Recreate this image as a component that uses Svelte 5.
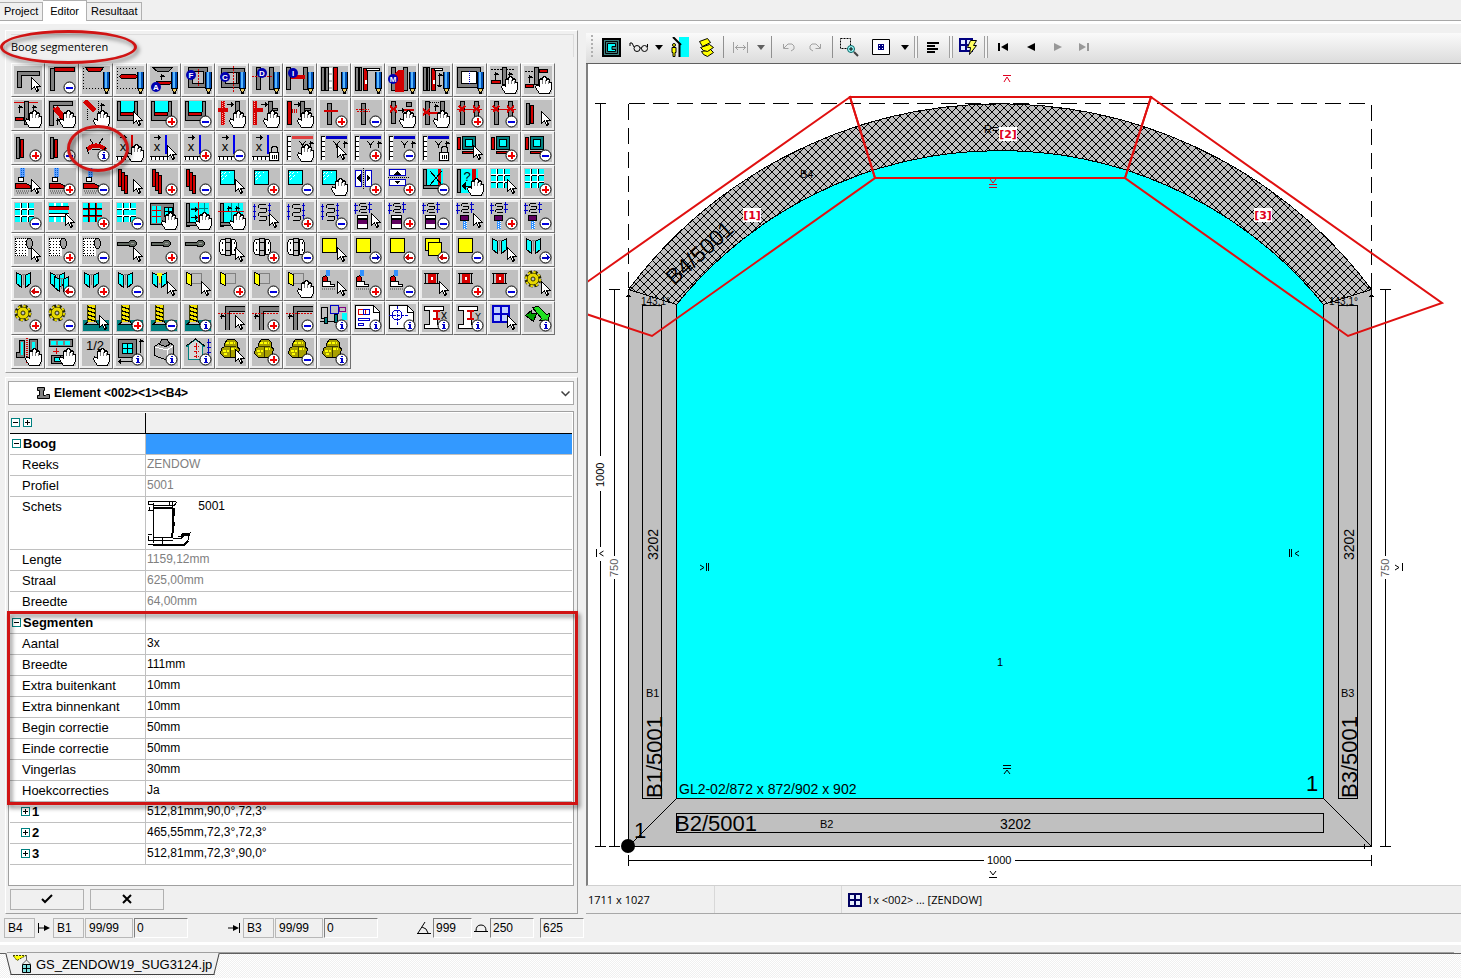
<script>
  const K = "#000";
  const G = "#808080";
  const R = "#d40000";
  const C = "#00ffff";
  const B = "#0000c8";
  const Y = "#ffff00";
  const W = "#fff";
  const T = "#008080";

  const r = (x, y, w, h, fill = "none", stroke) =>
    stroke
      ? `<rect x="${x + 0.5}" y="${y + 0.5}" width="${w - 1}" height="${h - 1}" fill="${fill}" stroke="${stroke}"/>`
      : `<rect x="${x}" y="${y}" width="${w}" height="${h}" fill="${fill}"/>`;
  const p = (d, stroke = K, fill = "none", w = 1, dash = "") =>
    `<path d="${d}" stroke="${stroke}" fill="${fill}" stroke-width="${w}" stroke-dasharray="${dash}"/>`;
  const t = (x, y, s, size = 9, fill = K, weight = 400) =>
    `<text x="${x}" y="${y}" font-size="${size}" fill="${fill}" font-weight="${weight}" text-anchor="middle" font-family="Liberation Sans, sans-serif">${s}</text>`;
  const badge = (x, y, s) =>
    `<circle cx="${x}" cy="${y}" r="5" fill="#0000b0" shape-rendering="auto"/>` + t(x, y + 3, s, 8, W, 700);
  const move = (x, y, s) => `<g transform="translate(${x} ${y})">${s}</g>`;

  const disc = `<circle cx="21.5" cy="21.5" r="5.5" fill="#fff" stroke="#000" shape-rendering="auto"/>`;
  const marks = {
    c: p("M17.5 11.5v12l3-3 2 5 2-1-2-4h4z", K, W),
    "+": disc + r(18, 21, 7, 2, "#f00000") + r(21, 18, 2, 7, "#f00000"),
    "-": disc + r(18, 21, 7, 2, "#0000e0"),
    i: disc + r(21, 18, 2, 1, B) + r(20, 20, 3, 1, B) + r(21, 20, 2, 5, B) + r(20, 24, 4, 1, B),
    h: p("M15.5 27.5l-4-6 1-3 3 2v-7l2-1 1 2v-3l2-1 2 1v3l1-2 2 1v3l2 0 0 6-2 5z", K, W) +
      p("M18.5 14v4M21.5 14v4M24.5 15v3", G),
    p: r(21, 6, 7, 17, "#0050b8") + r(23, 6, 2, 17, "#58b8ff") + r(21, 6, 1, 17, K) + r(27, 6, 1, 17, K) +
      p("M21.5 22.5l3 5 3-5z", K, "#e8c860") + r(23, 26, 3, 2, K),
    l: r(17, 18, 10, 9, W, K) + p("M19.5 18v-4l2-2h2l2 2v4", K) + p("M20.5 21v4M22.5 21v4M24.5 21v4"),
    ">": disc + r(18, 21, 7, 2, B) + p("M22.5 18.5l3 3-3 3", B, B),
    "<": disc + r(18, 21, 7, 2, R) + p("M20.5 18.5l-3 3 3 3", R, R),
  };

  const post = (x, y = 1, h = 24, fill = G) => r(x, y, 5, h, fill, K);
  const up = (x, y, h = 8) => p(`M${x}.5 ${y}v${h}M${x - 2}.5 ${y + 2}.5h5M${x - 1}.5 ${y + 1}.5h3`);
  const right = (x, y) => p(`M${x} ${y}.5h7M${x + 4}.5 ${y - 2}v5M${x + 5}.5 ${y - 1}v3`);
  const slab = r(2, 3, 4, 22, G, K) + r(6, 5, 4, 19, R, K);
  const blocks = [1, 8, 15].map((y) => [1, 8, 15].map((x) => r(x, y, 5, 5, C)).join("")).join("");
  const bars = "M1 6.5h19M1 13.5h19M6.5 1v19M13.5 1v19";
  const cells = (line) =>
    r(1, 1, 19, 19, W) + p(bars, line, "none", 3, line === R ? "" : "5 2") + p(bars, line === R ? K : W) + blocks;
  const chain = p("M2.5 2v16M1 4.5h3M1 9.5h3M1 14.5h3M17.5 1v16M16 3.5h3M16 8.5h3M16 13.5h3", B) +
    p("M7 2.5h7M8 6.5h7M7 10.5h7M8 14.5h7M7 18.5h7M6.5 3v3M14.5 7v3M6.5 11v3M14.5 15v3");
  const chainTop = p("M1.500 1v11M0 3.5h4M0 8.5h4M15.5 0v11M14 2.5h4M14 7.5h4", B) +
    p("M6 1.5h6M7 4.5h6M6 7.5h6M7 10.5h6M5.5 2v2M12.5 5v2M5.5 8v2");
  const pane = r(2, 2, 15, 15, C, K) + p("M3 9l6-6M4 12l8-8M3 6l3-3", W, "none", 1, "1 1");
  const doors = p("M2.5 2.5l5 3v12l-5-4zM16.5 2.5l-5 3v12l5-4z", K, C) + p("M7.5 4.5h4M9.5 5v10", G);
  const gear = `<g shape-rendering="auto"><circle cx="9" cy="9" r="6.5" fill="none" stroke="#202000" stroke-width="4" stroke-dasharray="3.5 1.6"/>` +
    `<circle cx="9" cy="9" r="6" fill="#e8d800" stroke="#303000"/><circle cx="9" cy="9" r="7" fill="none" stroke="#e8d800" stroke-width="2" stroke-dasharray="2.500 3"/>` +
    `<circle cx="9" cy="9" r="2" fill="#c0c0c0" stroke="#303000"/></g>`;
  const spring = r(1, 16, 26, 11, T) + p("M3 20.5h13l-2-3h-8z", K, "#c0c0c0") + r(5, 1, 9, 17, "#f0e000") +
    p("M5 2.5l9 3M5 6.5l9 3M5 10.5l9 3M5 14.5l9 3") + p("M5.5 1v17M13.5 1v17", "#404000");
  const xruler = (col) => p(`M16 1v19`, col, "none", 2) + right(4, 3) + t(7, 17, "x", 13) +
    r(0, 22, 19, 4, W) + p("M0 22.5h19M1.5 22v4M5.5 22v4M9.5 22v4M13.5 22v4M17.5 22v4");
  const yruler = (col) => r(1, 2, 4, 24, W) + p("M1.5 2v24M1 2.5h4M1 7.5h4M1 12.5h4M1 17.5h4M1 22.5h4") +
    r(6, 2, 21, 3, col) + p("M13 7l3.500 4 3.500-4M16.5 11v3") + up(24, 7, 7);
  const sqTeal = r(1, 3, 4, 13, R, K) + r(6, 2, 14, 14, T, K) + r(9, 5, 8, 8, C, K) + r(6, 17, 13, 3, R, K);
  const shower = r(6, 0, 5, 9, "#60a0ff") + p("M7.5 0v9M9.5 0v9", "#0060d0", "none", 1, "1 1") +
    p("M4.5 9.5h5v4h-5z", K, W) + p("M1.5 15.5h10l5 2v3h-15z", K, R) + p("M2 22.5h16M3 24.5h12", G, "none", 2, "1 1");
  const tap = r(6, 0, 4, 6, "#3090ff") + p("M2.5 11.5v-4l3-2 2 2v4z", K, R) +
    p("M2.5 11.5h8v3h4v2h-12z", K, W) + p("M2 18.5h13", G, "none", 2, "1 1");
  const slabs = r(2, 1, 4, 18, R, K) + r(5, 4, 4, 19, R, K) + r(8, 7, 4, 19, R, K);
  const glassRed = r(1, 1, 21, 20, G, K) + r(5, 1, 13, 11, C) + r(4, 12, 14, 4, R, K) + p("M4.5 1v11M18.5 1v11");
  const roll = r(1, 3, 13, 17, W) + p("M2 5.5h12M2 8.5h12M2 11.5h12M2 14.5h12M2 17.5h12", K, "none", 1, "1 2") + p("M1 2.5h12M1 19.5h12M1.5 3v16", K, "none", 1, "1 1") +
    p("M13.5 2.5h3l2 3v4l-2 3h-2l-2-3v-4z", K, "#a0a0a0");
  const handle = p("M1.5 6.5h11l2-2h4l2 2v2l-2 2h-4l-2-1h-11z", K, "#606860") + p("M15 7.5h3", "#a0a0a0");
  const hinge = p("M3.5 3.5h4v15h-4l-2-3v-9zM13.5 3.5h3l2 3v9l-2 3h-3z", K, W) + r(7, 2, 6, 18, "#c0c0c0", K) +
    p("M7 6.5h6M7 14.5h6") + p("M4.500 6v2M4.500 13v2M16 6v2M16 13v2", K, "none", 1);
  const yellow = r(2, 2, 15, 15, Y, K);
  const doorY = r(7, 3, 11, 11, "none", G) + p("M2.5 2.5l5 2v11l-5-2z", K, Y);
  const bolt = p("M2 3.5h15M2 13.5h15M3.5 3v10M15.5 3v10") + r(6, 4, 8, 9, W, R) + r(7, 5, 6, 7, R) + r(9, 7, 2, 3, W);
  const lintel = p("M7.5 26V2.5H27M11.5 26V7.5H27", K, "none") + r(8, 3, 19, 4, G) + r(8, 3, 3, 23, G) +
    p("M0 9.5h27", R, "none", 1, "2 1") + up(3, 10, 5);
  const xx = p("M1 9.5h25", R) + post(4) + post(18) + p("M3 6l6 6M9 6l-6 6M17 6l7 6M24 6l-7 6", R, "none", 2);
  const bag = p("M6.5 5.5l3-4h7l3 3v5l2 1-1 6-4 3h-10l-4-4 1-5 3-2z", K, "#a8a000") +
    p("M8 4.5h9M5 12.5h6M13 10.5h5M6 15.5h4", Y, "none", 2, "3 1") + p("M6 8.5h12M12.5 8v11", "#404000");
  const beam = p("M2.5 2.5h19v4h-6v14h6v4h-19v-4h5v-14h-5z", K, W);

  const glyphs = {
    corner: p("M3.5 21.5V5.5H25.5V9.5H7.5V21.5z", K, G),
    cornerRed: r(2, 2, 5, 23, G, K) + r(6, 1, 21, 5, R, K),
    topRed: p("M1.5 2v21M1 22.5h20", K, "none", 1, "1 2") + p("M3.5 1.5h18l-3 4h-12z", K, R),
    midRed: p("M1.5 2v21M1 22.5h20M1 2.5h20", K, "none", 1, "1 2") + p("M3.5 10.5l2-2h14l2 2-2 2h-14z", K, R),
    a: p("M2.5 1.5h20l-4 4h-11z", K, G) + up(11, 8, 6) + p("M6.5 15.5h16l-3 3h-10z", K, R) + badge(6, 21, "A"),
    f: r(4, 1, 20, 21, G, K) + r(8, 5, 12, 13, "#c0c0c0", K) + p("M14.5 3v17", R, "none", 1, "2 1") + badge(7, 9, "F"),
    cc: r(3, 2, 24, 20, G, K) + r(7, 6, 17, 12, "#c0c0c0", K) + p("M15.5 0v26", R, "none", 1, "2 1") + r(18, 6, 3, 12, G, K) + badge(7, 11, "C"),
    d: post(4, 1, 23) + post(17, 1, 23) + p("M0 10.5h21", R, "none", 1, "2 1") + badge(10, 7, "D"),
    ii: post(0, 1, 23) + post(17, 1, 23) + r(5, 9, 14, 4, R) + badge(7, 7, "I"),
    prof: r(1, 1, 4, 24, G, K) + r(5, 1, 4, 24, G, K) + p("M10.5 2v22", W, "none", 3, "5 2") + r(13, 1, 5, 24, R, K),
    handleRed: r(1, 1, 4, 24, G, K) + r(5, 1, 3, 24, G, K) + r(9, 2, 5, 23, R, K) + r(11, 14, 2, 4, W) + r(12, 2, 14, 3, W, K),
    m: r(3, 1, 5, 24, G, K) + r(15, 1, 5, 24, G, K) + p("M7 8l4-4h4v21h-8z", R, R) + badge(5, 13, "M"),
    handleUp: r(1, 1, 4, 24, G, K) + r(5, 1, 3, 24, G, K) + r(9, 2, 5, 23, R, K) + r(11, 14, 2, 4, W) + r(12, 2, 9, 3, W, K) + up(17, 7, 14) + p("M15 19.5h5M16 20.5h3"),
    window: r(1, 1, 24, 21, G, K) + r(5, 5, 16, 13, W, K) + p("M13.5 5v13", B, "none", 1, "1 1"),
    ups: p("M1 3.5h24", K, "none", 1, "2 1") + post(12, 1, 18) + up(5, 6) + up(19, 6) + r(1, 14, 10, 4, R, K),
    ups2: p("M1 5.5h9", K, "none", 1, "2 1") + post(10, 1, 18) + r(15, 3, 9, 4, R, K) + up(5, 9) + r(1, 18, 9, 4, R, K),
    tee: p("M0 2.5h24", R) + post(10, 1, 24) + up(5, 5) + up(19, 5) + r(1, 17, 9, 4, R, K),
    diag: p("M1.5 25V1.5H24V5.5H5.5V25z", K, G) + p("M5.5 8l9 11M8.5 7l8 10", R, "none", 3) + up(9, 18, 7),
    diag2: p("M3 1l10 10", R, "none", 5) + p("M16 1v18M5 9v12", K, "none", 1, "1 1") + up(19, 3, 7),
    glassRed,
    cross: r(3, 1, 4, 24, R) + p("M4.5 1v24M6.5 2v24", "#ffa0a0", "none", 1, "1 1") + r(0, 8, 10, 4, R) + right(9, 4) + post(17, 1, 16),
    cross2: r(1, 1, 4, 24, R) + p("M2.5 1v24", "#ffa0a0", "none", 1, "1 1") + r(2, 8, 9, 4, R) + right(9, 4) + post(16, 1, 16) + r(20, 8, 6, 3, G, K),
    cross3: r(1, 1, 5, 24, R, K) + p("M6 9.5h6M6 11.5h6", R, "none", 2, "1 1") + right(8, 4) + post(14, 1, 16) + r(18, 8, 7, 3, G, K),
    postRed: post(7, 3, 22) + r(4, 10, 14, 2, R),
    postDot: post(7, 3, 22) + p("M2 9.5h13M3 11.5h13", R, "none", 1, "2 1"),
    xPost: post(3, 1, 23) + p("M2 6l7 6M9 6l-7 6", R, "none", 2) + right(10, 10) + r(18, 2, 6, 5, G, K) + r(16, 9, 10, 2, R),
    xPost2: post(3) + post(18) + p("M1 9l7 6M8 9l-7 6", R, "none", 2) + up(13, 4, 7) + p("M8 2.5h10", K, "none", 1, "1 1") + r(3, 12, 14, 2, R),
    xx,
    slab,
    arc: p("M5 16q9-9 19 0", R, "none", 4) + p("M4 13l3 7M11 10l-3-5M17 10l4-6M24 13l-4 6M10 15h8", K),
    xRed: xruler(R), xBlue: xruler("#0000f0"), yRed: yruler("#e04040"), yBlue: yruler(B),
    sqTeal, shower, slabs, pane,
    splitH: r(1, 2, 7, 17, W, B) + r(11, 2, 7, 17, W, B) + p("M9.5 0v21", K, "none", 1, "1 1") + p("M3 10l3-3v6zM16 10l-3-3v6z", K, K),
    splitV: r(1, 1, 17, 7, W, B) + r(1, 11, 17, 7, W, B) + p("M0 9.5h21", K, "none", 1, "1 1") + p("M9.5 4l-2 2h4zM9.5 15l-2-2h4z", K, K),
    glassX: r(1, 1, 20, 20, C) + r(1, 1, 4, 20, G, K) + r(1, 17, 20, 4, G, K) + r(16, 1, 3, 16, R) + p("M8 3l12 14M20 3L8 17", K, "none", 1),
    glassQ: r(1, 1, 21, 24, C) + r(1, 1, 4, 24, G, K) + r(16, 1, 4, 13, R) + t(11, 13, "?", 13) + p("M6 18l3-3v6zM6 18.5h10", K, K),
    grid: cells(K),
    gridBar: r(1, 1, 19, 19, C) + p("M6.5 1v5M13.5 1v5M6.5 14v6M13.5 14v6", W, "none", 2) + p("M1 6.5h20", R, "none", 3) + p("M1 12.5h20", W, "none", 3) + p("M1 11.5h20M1 14.5h20M1 4.5h20", K),
    gridRed: cells(R),
    gridGap: cells(K) + r(8, 8, 12, 5, C),
    gridWin: r(0, 1, 24, 22, G, K) + r(2, 4, 9, 17, C) + p("M2 8.5h9M2 14.5h9M6.5 4v17", R) + r(14, 5, 9, 10, C, K) + p("M14 9.5h9M18.5 5v10"),
    rulerCyan: r(3, 1, 22, 22, C) + r(2, 1, 4, 24, G, K) + r(2, 20, 12, 4, G, K) + p("M14.5 0v26", R) + p("M7 6.5h17M20.5 1v14", T) + right(7, 7) + right(7, 15),
    rulerCyan2: r(3, 1, 22, 22, C) + r(2, 1, 4, 24, G, K) + r(2, 20, 12, 4, G, K) + p("M0 9.5h26", R) + p("M13.5 1v18M20.5 1v18", T) + up(10, 4, 5) + up(18, 4, 5),
    chain,
    chainBox: chainTop + r(3, 13, 11, 4, W, K) + r(3, 17, 11, 6, "#600060", K) + p("M3.5 22v4h10v-4", K, W),
    chainTip: chainTop + r(4, 13, 9, 6, "#600060", K) + p("M9 19v8", "#3090ff", "none", 4) + p("M8.5 20v7M10.5 19v8", W, "none", 1, "1 1"),
    roll, handle, hinge, yellow,
    yellow2: r(3, 2, 15, 13, Y, K) + r(6, 6, 14, 14, Y, K),
    doors,
    doors2: doors + move(4, 4, doors),
    doorsY: doors + r(7, 3, 5, 3, Y) + r(9, 5, 2, 8, Y),
    doorY, tap, bolt, gear, spring, lintel,
    pipes: r(1, 3, 7, 12, "#c0c0c0", K) + r(10, 1, 9, 9, "#c0c0c0", B) + r(19, 3, 7, 5, "#c0c0c0", "#800080") + r(4, 13, 4, 7, T, K) + r(14, 10, 4, 9, T, K) + r(22, 9, 5, 7, C) + p("M0 17.5h4M8 17.5h6"),
    plan: p("M1.5 1.5h18l6 6v17h-24z", K, W) + p("M19.5 2v6h6") + r(4, 5, 8, 6, "none", R) + r(9, 5, 7, 6, "none", B) + r(4, 14, 12, 3, "none", B) + r(4, 19, 6, 3, "none", B),
    target: p("M1.5 1.5h18l6 6v17h-24z", K, W) + p("M19.5 2v6h6") + `<circle cx="9" cy="11" r="5" fill="none" stroke="${B}"/>` + p("M9.5 2v19M1 11.5h20", B, "none", 1, "3 1"),
    beamX: beam + p("M11 7h7M11 15h7M14.5 7v8", R, "none", 2) + t(22, 15, "x", 12),
    beamY: beam + p("M11 7h7M11 15h7M14.5 7v8", R, "none", 2) + t(22, 15, "Y", 9),
    win4: r(2, 1, 18, 18, W, B) + r(3, 2, 16, 16, "#c0d0ff", B) + p("M11 2v16M3 10h16", B, "none", 2),
    green: p("M1.5 11.5l6-5v3l5 0-3 8z", K, "#00a000") + p("M8.5 3.5l6-1 8 8 3-1-1 8-9-1 2-2z", K, "#20e020"),
    sliders: p("M5.5 2.500h5v17h-8v-5h3z", K, G) + r(7, 4, 2, 13, C) + r(15, 1, 9, 15, G, K) + r(18, 4, 3, 10, C) + p("M12.5 0v26", R, "none", 2, "1 1"),
    frames: r(1, 1, 24, 8, G, K) + r(3, 3, 5, 4, C) + r(10, 3, 5, 4, C) + r(17, 3, 5, 4, C) + p("M5 13.5h6M8.5 10v6", R) + r(3, 17, 16, 9, G, K) + r(6, 19, 8, 5, C, K),
    half: t(13, 12, "1/2", 13),
    frameCross: r(2, 1, 19, 19, G, K) + r(6, 5, 11, 11, C, K) + p("M11.5 6v9M7 10.5h9") + up(24, 1, 14) + p("M2 23.5h14M4.5 21v5M3.5 22v3"),
    box: p("M4.5 8.5l6-4h9l4 3v9l-6 6-13-5z", K, "#b8b8b8") + p("M5 9l12 3 6-4M17.5 12v10", W) + p("M9.5 6.5l2-5h6l2 5-4 2z", K, "#909090"),
    house: p("M4.5 21.5v-13l-2 0 9-7 9 7h-2v13z", T, "#d8d8d8") + p("M2 8l9.5-7 9.5 7") + p("M12.5 5v16M10 8.5h5M10 13.5h5M10 18.5h5", R, "none", 1, "3 1") + p("M24.5 1v17M23 4.5h4M23 9.5h4M23 14.5h4", B),
    bag,
  };

  // one row of the palette per line, "glyph:mark"
  const palette = `
    corner:c cornerRed:- topRed:p midRed:p a:p f:p cc:p d:p ii:p prof:p handleRed:p m:p handleUp:p window:p ups:h ups2:h
    tee:h diag:h diag2:h glassRed:c glassRed:+ glassRed:- cross:h cross2:h cross3:h postRed:+ postDot:- xPost:h xPost2:h xx:+ xx:- slab:c
    slab:+ slab:- arc:i xRed:h xBlue:c xBlue:+ xBlue:- xBlue:l yRed:h yBlue:c yBlue:+ yBlue:- yBlue:l sqTeal:c sqTeal:+ sqTeal:-
    shower:c shower:+ shower:- slabs:c slabs:+ slabs:- pane:c pane:+ pane:- pane:h splitH:+ splitV:+ glassX:- glassQ:h grid:c grid:+
    grid:- gridBar:c gridRed:+ gridGap:- gridWin:h rulerCyan:h rulerCyan2:h chain:c chain:+ chain:- chainBox:c chainBox:+ chainBox:- chainTip:c chainTip:+ chainTip:-
    roll:c roll:+ roll:- handle:c handle:+ handle:- hinge:c hinge:+ hinge:- yellow:c yellow:> yellow:< yellow2:< yellow:- doors:c doors:>
    doors:< doors2:< doors:+ doors:- doorsY:c doorY:c doorY:+ doorY:- doorY:h tap:c tap:+ tap:- bolt:c bolt:+ bolt:- gear:c
    gear:+ gear:- spring:c spring:+ spring:- spring:i lintel:c lintel:+ lintel:- pipes:i plan:i target:i beamX:i beamY:i win4:c green:i
    sliders:h frames:h half:h frameCross:i box:i house:i bag:c bag:+ bag:- bag:i`;
  const tools = palette.trim().split(/\s+/).map((s) => s.split(":"));

  const boog = [
    ["Reeks", "ZENDOW"],
    ["Profiel", "5001"],
    ["Schets", "5001"],
    ["Lengte", "1159,12mm"],
    ["Straal", "625,00mm"],
    ["Breedte", "64,00mm"],
  ];
  const segmenten = [
    ["Aantal", "3x"],
    ["Breedte", "111mm"],
    ["Extra buitenkant", "10mm"],
    ["Extra binnenkant", "10mm"],
    ["Begin correctie", "50mm"],
    ["Einde correctie", "50mm"],
    ["Vingerlas", "30mm"],
    ["Hoekcorrecties", "Ja"],
  ];
  const delen = [
    ["1", "512,81mm,90,0°,72,3°"],
    ["2", "465,55mm,72,3°,72,3°"],
    ["3", "512,81mm,72,3°,90,0°"],
  ];
</script>

{#snippet expander(open)}
  <svg class="expander" width="9" height="9" viewBox="0 0 9 9">
    <rect x=".5" y=".5" width="8" height="8" fill="#fff" stroke="#008080" />
    <path d={open ? "M2 4.5h5" : "M2 4.5h5M4.5 2v5"} stroke="#000" />
  </svg>
{/snippet}

{#snippet caret(off)}
  <button class="caret" aria-label="Meer"><svg width="9" height="5" viewBox="0 0 9 5"><path d="M0 0h8l-4 5z" fill={off ? "#606060" : "#000"} /></svg></button>
{/snippet}

<div class="app">
  <nav class="tabs">
    <button>Project</button>
    <button class="active">Editor</button>
    <button>Resultaat</button>
  </nav>

  <main>
    <section class="left">
      <div class="toolbox">
        <div class="title"><span>Boog segmenteren</span></div>
        <div class="palette">
          {#each tools as [glyph, mark]}
            <button class="tool" class:marked={glyph === "arc"} aria-label={glyph + " " + mark}>
              <svg width="28" height="28" viewBox="0 0 28 28">{@html glyphs[glyph] + marks[mark]}</svg>
            </button>
          {/each}
        </div>
      </div>

      <div class="props">
        <div class="element">
          <select aria-label="Element">
            <option>Element &lt;002&gt;&lt;1&gt;&lt;B4&gt;</option>
          </select>
          <svg class="profile" width="13" height="13" viewBox="0 0 13 13"><path d="M.5.5h7v3h-1v5h2l1-1h3v4h-12v-3h2v-5h-2z" fill="#808080" stroke="#000" /></svg>
          <svg class="arrow" width="9" height="6" viewBox="0 0 9 6"><path d="M.5.5l4 4 4-4" fill="none" stroke="#404040" stroke-width="1.5" /></svg>
        </div>

        <div class="grid">
          <table>
            <thead>
              <tr><th>{@render expander(true)} {@render expander(false)}</th><td></td></tr>
            </thead>
            <tbody>
              <tr class="group selected"><th>{@render expander(true)}Boog</th><td></td></tr>
              {#each boog as [label, value]}
                <tr class:sketch={label === "Schets"}>
                  <th>{label}</th>
                  <td class:readonly={label !== "Schets"}>
                    {#if label === "Schets"}
                      <svg width="44" height="46" viewBox="0 0 44 46" fill="none" stroke="#000">
                        <path d="M0 1.5h28M0 1v3h5M0 10.5h5M5.5 3v40M1.5 10v-3M6 5.5h20M24.5 2v6M21.5 2v4M29 2l-3 4M22 8h4v8M24 20l2 2v4M6 37.500h19M6 40.500h19M14.500 38v6M25 38.500h8l3-3M34 34l8-1-2 4v3l-4 5M0 36v4h5M30 37l10-2M0 44.500h5M0 34.500h4" />
                        <path d="M6 8h19M25 9v20l-1 8M5 45h31l4-4M33 35h9" stroke-width="2" />
                      </svg>
                    {/if}
                    <span>{value}</span>
                  </td>
                </tr>
              {/each}
            </tbody>
            <tbody class="outlined">
              <tr class="group"><th>{@render expander(true)}Segmenten</th><td></td></tr>
              {#each segmenten as [label, value]}
                <tr><th>{label}</th><td>{value}</td></tr>
              {/each}
            </tbody>
            <tbody>
              {#each delen as [label, value]}
                <tr class="group sub"><th>{@render expander(false)}{label}</th><td>{value}</td></tr>
              {/each}
            </tbody>
          </table>
        </div>

        <div class="actions">
          <button aria-label="OK"><svg width="12" height="10" viewBox="0 0 12 10"><path d="M1 5l3 3 7-7" fill="none" stroke="#000" stroke-width="2" /></svg></button>
          <button aria-label="Annuleren"><svg width="10" height="10" viewBox="0 0 10 10"><path d="M1 1l8 8M9 1l-8 8" stroke="#000" stroke-width="2" /></svg></button>
        </div>
      </div>
    </section>

    <section class="right">
      <div class="toolbar">
        <i class="grip"></i>
        <button aria-label="Kader"><svg width="19" height="19" viewBox="0 0 19 19"><path d="M1 1h17v17H1z" fill="#408080" stroke="#000" stroke-width="2" /><path d="M3.5 3.5h12v12h-12z" fill="#408080" stroke="#000" /><path d="M5.5 5.5h8v8h-8z" fill="#00ffff" stroke="#000" /><path d="M14 8.500h-4v3h4" fill="#408080" stroke="#000" /></svg></button>
        <button aria-label="Bril"><svg width="20" height="12" viewBox="0 0 20 12" fill="none" stroke="#000"><circle cx="8" cy="7.5" r="3" /><circle cx="15.5" cy="7.5" r="3" /><path d="M5 6l-2-4-2 0v3M11 7h2M18.5 6V3" /></svg></button>
        {@render caret(false)}
        <button aria-label="Binnen"><svg width="18" height="20" viewBox="0 0 18 20"><path d="M8 0h10v20H8z" fill="#00ffff" /><path d="M2 0l8 8M8.5 7v13" stroke="#000" stroke-width="2" fill="none" /><circle cx="3" cy="8" r="1.5" fill="#ffff00" stroke="#000" /><path d="M1 10.5h4v5H4v4H2v-4H1z" fill="#ffff00" stroke="#000" /></svg></button>
        <button aria-label="Lagen"><svg width="17" height="19" viewBox="0 0 17 19" fill="#ffff00" stroke="#000"><path d="M3.5 13.5l9-2 3 3-6 4-4-2z" /><path d="M2.5 9.500l9-3 4 3-6 4-4-1z" /><path d="M1.5 3.5l8-3 3 4-8 4z" /></svg></button>
        <i class="sep"></i>
        <button aria-label="Maat"><svg width="15" height="11" viewBox="0 0 15 11" fill="none" stroke="#a0a0a0"><path d="M.5 0v11M14.5 0v11M2 5.5h11M5 3L2.5 5.5 5 8M10 3l2.5 2.5L10 8" /></svg></button>
        {@render caret(true)}
        <i class="sep"></i>
        <button aria-label="Ongedaan"><svg width="13" height="9" viewBox="0 0 13 9" fill="none" stroke="#a0a0a0"><path d="M1.5 1v4.5h5M2 5l4-4h4l2 2v3l-3 2" /></svg></button>
        <button aria-label="Opnieuw"><svg width="13" height="9" viewBox="0 0 13 9" fill="none" stroke="#a0a0a0"><path d="M11.5 1v4.5h-5M11 5L7 1H3L1 3v3l3 2" /></svg></button>
        <i class="sep"></i>
        <button aria-label="Zoom"><svg width="19" height="19" viewBox="0 0 19 19" fill="none" stroke="#000"><path d="M.5.5h10v10H.5z" stroke-dasharray="2 1" /><circle cx="11" cy="11" r="3.5" fill="#a0ffff" stroke="#006060" /><path d="M9 11h4M11 9v4" /><path d="M14 14l4 4" stroke-width="2" stroke="#404040" /></svg></button>
        <button class="wide" aria-label="Beeld"><svg width="18" height="16" viewBox="0 0 18 16"><path d="M.5.5h17v15H.5z" fill="#fff" stroke="#000" /><path d="M6 5h6v6H6z" fill="#000080" /><path d="M7.5 6v1M10.5 6v1M7.5 9v1M10.5 9v1" stroke="#fff" /></svg></button>
        {@render caret(false)}
        <i class="sep double"></i>
        <button aria-label="Lijst"><svg width="13" height="11" viewBox="0 0 13 11" stroke="#000" stroke-width="2"><path d="M0 1h12M0 4h8M0 7h11M0 10h8" /></svg></button>
        <i class="sep double"></i>
        <button aria-label="Bereken"><svg width="19" height="18" viewBox="0 0 19 18"><path d="M1 1h12v12H1z" fill="#e0e8ff" stroke="#000080" stroke-width="2" /><path d="M7 1v12M1 7h12" stroke="#000080" stroke-width="2" /><path d="M11.500 2.500h6l-3 5h3l-7 9 1-7h-3z" fill="#ffff60" stroke="#000" /></svg></button>
        <i class="sep double"></i>
        <button aria-label="Eerste"><svg width="11" height="8" viewBox="0 0 11 8"><path d="M0 0h2v8H0zM10 0v8L3 4z" /></svg></button>
        <button aria-label="Vorige"><svg width="8" height="8" viewBox="0 0 8 8"><path d="M8 0v8L0 4z" /></svg></button>
        <button aria-label="Volgende"><svg width="8" height="8" viewBox="0 0 8 8" fill="#989898"><path d="M0 0v8l8-4z" /></svg></button>
        <button aria-label="Laatste"><svg width="11" height="8" viewBox="0 0 11 8" fill="#989898"><path d="M8 0h2v8H8zM0 0v8l7-4z" /></svg></button>
      </div>

      <svg class="drawing" viewBox="588 64 873 821">
        <defs>
          <pattern id="hatch" width="8" height="8" patternUnits="userSpaceOnUse">
            <path d="M-1 -1L9 9M-1 9L9 -1" stroke="#000" />
          </pattern>
        </defs>

        <g class="lines">
          <path d="M628.5 103.5H1371.5V290M628.5 103.5V290" stroke-dasharray="16 8" />
          <path d="M628.5 289.5L676.5 304.5V798.5H1323.5V304.5L1371.5 289.5V846.5H628.5z" fill="#c0c0c0" />
          <path d="M676.5 304.5A417 417 0 0 1 1323.5 304.5V798.5H676.5z" fill="#00ffff" />
          <path d="M628.5 289.5A464.6 464.6 0 0 1 1371.5 289.5L1323.5 304.5A417 417 0 0 0 676.5 304.5z" fill="#c0c0c0" />
          <path d="M628.5 289.5A464.6 464.6 0 0 1 1371.5 289.5L1323.5 304.5A417 417 0 0 0 676.5 304.5z" fill="url(#hatch)" />
          <path d="M642.5 305.5h19v493h-19zM1338.5 305.5h19v493h-19zM676.5 813.5h647v19h-647z" />
          <path d="M628.5 846.5l48-48M1371.5 846.5l-48-48" />
          <path d="M600.5 103.5V456M600.5 491V547M600.5 561V846M595 103.5h11M595 846.5h11" />
          <path d="M614.5 289.5V556M614.5 579V846M609 289.5h11M609 846.5h11" />
          <path d="M1385.5 289.5V556M1385.5 579V846M1380 289.5h11M1380 846.5h11" />
          <path d="M628.5 860.5H984M1015 860.5H1371.5M628.5 855v11M1371.5 855v11" />
          <path d="M626 296.5h5M627 295.5h3M1369 296.5h5M1370 295.5h3M1363 846.5h8M1364.5 844v5" />
        </g>
        <circle cx="628" cy="846" r="7" />

        <g class="signs">
          <path d="M596.5 549v8M603.5 551l-4 2.5 4 2.5" />
          <path d="M700 565l4 2.5-4 2.5M706.5 563v8M708.5 563v8" />
          <path d="M1289.5 549v8M1291.5 549v8M1299 551l-4 2.5 4 2.5" />
          <path d="M1395 565l4 2.5-4 2.5M1402.5 563v8" />
          <path d="M1003 765.5h8M1003 768.5h8M1004 774l3-4 3 4" />
          <path d="M990 871l3 4 3-4M989 877.5h8" />
          <path class="red" d="M1003 75.5h8M1004 82l3-5 3 5M989 184.5h8M989 187.5h8M990 179l3 4 3-4" />
        </g>

        <text x="641" y="305" class="tiny">143,1°</text>
        <text x="1329" y="305" class="tiny">143,1°</text>
        <text x="800" y="178" class="small">B4</text>
        <text x="984" y="133" class="small">R=</text>
        <text class="big" transform="translate(674 286) rotate(-42)">B4/5001</text>
        <text class="big" transform="translate(662 798) rotate(-90)">B1/5001</text>
        <text class="big" transform="translate(1357 798) rotate(-90)">B3/5001</text>
        <text x="675" y="831" class="big">B2/5001</text>
        <text x="634" y="838" class="big">1</text>
        <text x="1306" y="791" class="big">1</text>
        <text x="679" y="794" class="mid">GL2-02/872 x 872/902 x 902</text>
        <text x="1000" y="829" class="mid">3202</text>
        <text class="mid" transform="translate(658 560) rotate(-90)">3202</text>
        <text class="mid" transform="translate(1354 560) rotate(-90)">3202</text>
        <text x="820" y="828" class="small">B2</text>
        <text x="646" y="697" class="small">B1</text>
        <text x="1341" y="697" class="small">B3</text>
        <text x="997" y="666" class="small">1</text>
        <text x="987" y="864" class="small">1000</text>
        <text class="small" transform="translate(604 487) rotate(-90)">1000</text>
        <text class="small gray" transform="translate(618 577) rotate(-90)">750</text>
        <text class="small gray" transform="translate(1389 577) rotate(-90)">750</text>

        <g class="segments">
          <path d="M580 287L850 97L875 178L652 336L580 312" />
          <path d="M850 97H1151L1125 178H875z" />
          <path d="M1151 97L1442 303L1348 336L1125 178z" />
        </g>
        {#each [[1, 752, 215], [2, 1008, 134], [3, 1263, 215]] as [n, x, y]}
          <rect x={x - 9} y={y - 7} width="18" height="14" fill="#fff" />
          <text {x} y={y + 4} class="tag">[{n}]</text>
        {/each}
      </svg>

      <footer>
        <span>1711 x 1027</span>
        <span></span>
        <span>
          <svg width="14" height="14" viewBox="0 0 14 14"><path d="M1 1h12v12H1zM7 1v12M1 7h12" fill="#e8f0ff" stroke="#000060" stroke-width="2" /></svg>
          1x &lt;002&gt; ... [ZENDOW]
        </span>
      </footer>
    </section>
  </main>

  <div class="status">
    <span class="cell">B4</span>
    <svg width="14" height="10" viewBox="0 0 14 10"><path d="M1.5 0v10M2 5h6" stroke="#000" /><path d="M7 2l6 3-6 3z" /></svg>
    <span class="cell">B1</span>
    <span class="cell long">99/99</span>
    <input class="long" aria-label="Begin" value="0" />
    <svg class="next" width="14" height="10" viewBox="0 0 14 10"><path d="M12.5 0v10M1 5h6" stroke="#000" /><path d="M6 2l6 3-6 3z" /></svg>
    <span class="cell">B3</span>
    <span class="cell long">99/99</span>
    <input class="long" aria-label="Einde" value="0" />
    <svg class="next" width="14" height="14" viewBox="0 0 14 14" fill="none" stroke="#000"><path d="M0 12.5h14M1 12L8 1M5 6q5 1 6 6" /></svg>
    <input class="short" aria-label="Hoek" value="999" />
    <svg width="14" height="10" viewBox="0 0 14 10" fill="none" stroke="#000"><path d="M0 8.5h14M2 8q0-6 5-6t5 6" /></svg>
    <input aria-label="Pijl" value="250" />
    <input class="last" aria-label="Straal" value="625" />
  </div>

  <div class="files">
    <a href="#file">
      <svg width="21" height="20" viewBox="0 0 21 20"><path d="M1 1.5h13l-9 5z" fill="#ffff00" stroke="#404000" stroke-dasharray="2 1" /><path d="M14.5 1v5l-4 4M14.5 6l4 4" stroke="#606060" fill="none" /><path d="M10.5 10.5h8v8h-8zM14.5 10v9M10 14.5h9" fill="#80e0e0" stroke="#000" /></svg>
      <span>GS_ZENDOW19_SUG3124.jp</span>
    </a>
  </div>
</div>

<style>
  :global(body) {
    background: #f0f0f0;
  }

  .app {
    min-height: 100vh;
    display: flex;
    flex-direction: column;
    background: #f0f0f0;
    font: 12px "Liberation Sans", sans-serif;
    color: #000;
    overflow: hidden;
  }

  button,
  input,
  select {
    font: inherit;
    color: inherit;
    border-radius: 0;
    margin: 0;
    box-sizing: border-box;
  }

  .tabs {
    display: flex;
    align-items: flex-end;
    height: 20px;
    border-bottom: 1px solid #a8a8a8;
    box-shadow: 0 3px #fff;
    margin-bottom: 3px;
  }

  .tabs button {
    height: 18px;
    padding: 0 4px;
    border: 1px solid #b0b0b0;
    border-bottom: 0;
    border-left: 0;
    background: #f0f0f0;
    font-size: 11px;
    line-height: 17px;
  }

  .tabs .active {
    height: 21px;
    padding: 0 7px;
    margin-bottom: -1px;
    background: #fff;
    line-height: 18px;
  }

  main {
    display: grid;
    grid-template-columns: minmax(578px, 39%) 1fr;
  }

  .left {
    padding: 6px 0 0 5px;
  }

  .toolbox,
  .props {
    border: 1px solid #fff;
    border-right-color: #a0a0a0;
    border-bottom-color: #a0a0a0;
  }

  .toolbox {
    margin-bottom: 4px;
    padding: 3px 3px 3px 5px;
  }

  .title {
    position: relative;
    height: 23px;
    margin-bottom: 6px;
    border: 1px solid #dcdcdc;
    border-width: 1px 1px 0 0;
    box-sizing: border-box;
    font: 11px/24px "Open Sans", sans-serif;
  }

  .title::after,
  .marked::after {
    content: "";
    position: absolute;
    border: 3px solid #d01414;
    border-radius: 50%;
    box-sizing: border-box;
    filter: drop-shadow(2px 3px 2px rgba(0, 0, 0, 0.5));
    pointer-events: none;
    z-index: 2;
  }

  .title::after {
    left: -11px;
    top: -5px;
    width: 137px;
    height: 34px;
  }

  .marked::after {
    inset: -7px -17px -8px -13px;
  }

  .palette {
    display: grid;
    grid-template-columns: repeat(16, 34px);
    grid-auto-rows: 34px;
  }

  .tool {
    position: relative;
    padding: 2px;
    border: 1px solid #fff;
    border-right-color: #707070;
    border-bottom-color: #707070;
    background: #ececec;
  }

  .tool svg {
    display: block;
    background: #c0c0c0;
    shape-rendering: crispEdges;
  }

  .props {
    padding: 3px 3px 3px 2px;
  }

  .element {
    position: relative;
    margin-bottom: 6px;
  }

  .element select {
    display: block;
    width: 100%;
    height: 24px;
    padding: 0 24px 0 45px;
    border: 1px solid #a8a8a8;
    background: #fff;
    appearance: none;
    font-weight: bold;
  }

  .profile {
    position: absolute;
    left: 29px;
    top: 6px;
  }

  .arrow {
    position: absolute;
    right: 4px;
    top: 10px;
  }

  .grid {
    min-height: 475px;
    box-sizing: border-box;
    padding: 1px;
    border: 1px solid #a0a0a0;
    background: #fff;
  }

  table {
    width: 100%;
    table-layout: fixed;
    border-collapse: separate;
    border-spacing: 0;
  }

  th,
  td {
    height: 20px;
    padding: 0;
    border-bottom: 1px solid #c0c0c0;
    text-align: left;
    line-height: 18px;
    vertical-align: top;
  }

  th {
    width: 123px;
    padding-left: 12px;
    border-right: 1px solid #c0c0c0;
    font-size: 13px;
    line-height: 20px;
    font-weight: normal;
  }

  td {
    padding-left: 1px;
  }

  thead th,
  thead td {
    background: #f0f0f0;
    border-color: #000;
  }

  thead th {
    width: 134px;
    padding-left: 1px;
    line-height: 20px;
  }

  thead .expander {
    margin-right: -1px;
  }

  .group th {
    padding-left: 2px;
    font-weight: bold;
  }

  .group.sub th {
    padding-left: 11px;
  }

  .group .expander {
    margin-right: 2px;
  }

  .selected td {
    background: #3399ff;
  }

  .readonly {
    color: #808080;
  }

  .sketch th,
  .sketch td {
    height: 52px;
  }

  .sketch td svg {
    margin: 3px 3px 0 1px;
    vertical-align: top;
    shape-rendering: crispEdges;
  }

  .outlined {
    position: relative;
  }

  .outlined::after {
    content: "";
    position: absolute;
    inset: -2px -6px -3px -3px;
    border: 3px solid #d01414;
    filter: drop-shadow(2px 3px 2px rgba(0, 0, 0, 0.5));
    pointer-events: none;
  }

  .actions {
    display: flex;
    gap: 6px;
    padding: 3px 0 0 2px;
  }

  .actions button {
    width: 74px;
    height: 21px;
    padding: 0;
    border: 1px solid #b0b0b0;
    background: #f0f0f0;
  }

  .right {
    display: flex;
    flex-direction: column;
    padding: 9px 0 0 8px;
  }

  .toolbar {
    display: flex;
    align-items: center;
    height: 28px;
    padding: 0 0 2px 5px;
    border-bottom: 1px solid #606060;
    background: linear-gradient(#fafafa, #dcdcdc);
  }

  .toolbar button {
    display: flex;
    align-items: center;
    justify-content: center;
    width: 27px;
    height: 26px;
    padding: 0;
    border: 0;
    background: none;
  }

  .toolbar .wide {
    width: 35px;
  }

  .toolbar .caret {
    width: 14px;
  }

  .grip {
    width: 2px;
    height: 24px;
    margin-right: 5px;
    background: repeating-linear-gradient(#b0b0b0 0 2px, transparent 2px 4px);
  }

  .sep {
    width: 1px;
    height: 22px;
    margin: 0 3px;
    background: #909090;
  }

  .sep.double {
    width: 2px;
    border: 1px solid #a0a0a0;
    border-width: 0 1px;
    margin: 0 2px;
    background: #f4f4f4;
  }

  .drawing {
    display: block;
    border-left: 2px solid #808080;
    border-bottom: 1px solid #d0d0d0;
    background: #fff;
    font-family: "Liberation Sans", sans-serif;
  }

  .lines {
    fill: none;
    stroke: #000;
    shape-rendering: crispEdges;
  }

  .signs {
    fill: none;
    stroke: #000;
  }

  .signs .red {
    stroke: #e00020;
  }

  .segments {
    fill: none;
    stroke: #e01010;
    stroke-width: 2;
  }

  .tiny {
    font-size: 10px;
  }

  .small {
    font-size: 11px;
  }

  .mid {
    font-size: 14px;
  }

  .big {
    font-size: 22px;
  }

  .gray {
    fill: #606060;
  }

  .tag {
    font: bold 11px "DejaVu Sans", sans-serif;
    fill: #e00020;
    text-anchor: middle;
  }

  footer {
    display: flex;
    height: 27px;
    border-bottom: 1px solid #a8a8a8;
    font: 11px/27px "Open Sans", sans-serif;
  }

  footer span {
    width: 120px;
    padding-left: 6px;
    border-right: 1px solid #d8d8d8;
  }

  footer span:first-child {
    padding-left: 2px;
    width: 126px;
  }

  footer span:last-child {
    flex: 1;
    border: 0;
  }

  footer svg {
    margin-right: 2px;
    vertical-align: -3px;
  }

  .status {
    display: flex;
    align-items: center;
    gap: 1px;
    padding: 3px 4px 4px;
    height: 21px;
    border-bottom: 3px solid #fff;
  }

  .cell {
    width: 31px;
    height: 20px;
    box-sizing: border-box;
    padding-left: 3px;
    border: 1px solid #b8b8b8;
    line-height: 18px;
  }

  .cell.long {
    width: 48px;
  }

  .status svg {
    margin: 0 1px;
  }

  .status .next {
    margin-left: 38px;
  }

  .status input {
    width: 44px;
    height: 20px;
    padding: 0 2px;
    border: 1px solid #808080;
    border-right-color: #fff;
    border-bottom-color: #fff;
    background: #f0f0f0;
  }

  .status input.long {
    width: 54px;
  }

  .status input.short {
    width: 39px;
  }

  .status .last {
    margin-left: 5px;
  }

  .files {
    flex: 1;
    min-height: 23px;
    margin-top: 8px;
    border-top: 1px solid #606060;
    box-shadow: 0 -8px 0 -7px #a0a0a0;
    background: repeating-conic-gradient(#f0f0f0 0 25%, #fff 0 50%) 0 0 / 2px 2px;
  }

  .files a {
    position: relative;
    z-index: 0;
    display: inline-flex;
    align-items: center;
    gap: 3px;
    height: 22px;
    margin: -1px 0 0 8px;
    padding: 0 5px 0 4px;
    color: #000;
    font-size: 13px;
    text-decoration: none;
  }

  .files a::before,
  .files a::after {
    content: "";
    position: absolute;
    z-index: -1;
    top: 0;
    bottom: 0;
    border-bottom: 1px solid #404040;
    background: #f0f0f0;
  }

  .files a::before {
    left: 0;
    right: 20px;
    border-left: 1px solid #404040;
    transform: skewX(14deg);
  }

  .files a::after {
    left: 20px;
    right: 0;
    border-right: 1px solid #404040;
    transform: skewX(-14deg);
  }
</style>
